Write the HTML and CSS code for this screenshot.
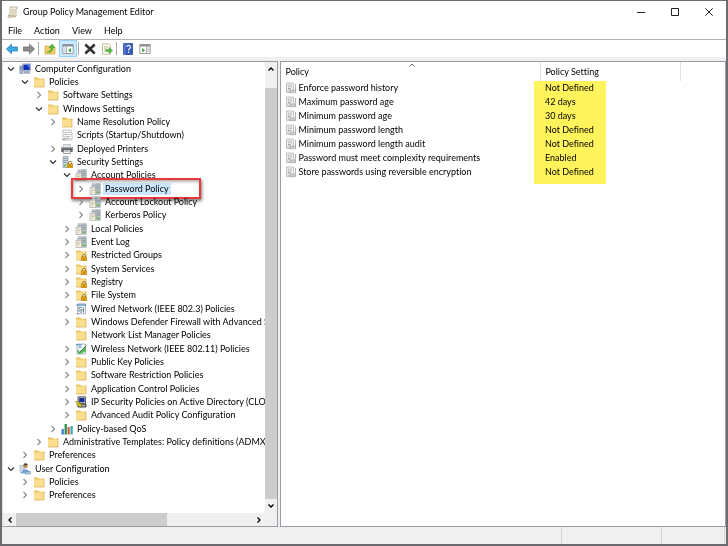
FILE: index.html
```
<!DOCTYPE html>
<html lang="en">
<head>
    <meta charset="UTF-8">
    <meta name="viewport" content="width=device-width, initial-scale=1.0">
    <title>Group Policy Management Editor</title>
    <link rel="stylesheet" href="styles.css">
</head>
<body>
    <!-- Icon set -->
    <svg class="sprite" aria-hidden="true">
        <symbol id="folder" viewBox="0 0 12 12">
            <path d="M1 1.500h4l1 1h5v8.500H1z" fill="#e9c465"/>
            <path d="M1 3.500h10v7.500H1z" fill="#fbdf8f"/>
            <path d="M7 1.500h3v1.500h-3z" fill="#fff5d5"/>
            <path d="M1 11h10V2.500" fill="none" stroke="#d3a848" stroke-width=".7"/>
        </symbol>
        <symbol id="lock" viewBox="0 0 12 12">
            <path d="M7.500 8V6.800a1.500 1.500 0 0 1 3 0V8" fill="none" stroke="#8b7430" stroke-width=".9"/>
            <path d="M6.300 7.800h5.400V12H6.300z" fill="#e8a81c" stroke="#a36f08" stroke-width=".5"/>
            <path d="M9 9v1.800" stroke="#7c5300" stroke-width=".8"/>
        </symbol>
        <symbol id="folder-lock" viewBox="0 0 12 12">
            <use href="#folder"/>
            <use href="#lock"/>
        </symbol>
        <symbol id="server" viewBox="0 0 12 12">
            <path d="M3 .8h3.500v6H3z" fill="#dfe5e8" stroke="#8a979e" stroke-width=".6"/>
            <path d="M7.300.8h3.900v10.400H7.300z" fill="#c3ccd2" stroke="#78868f" stroke-width=".6"/>
            <path d="M3.500 2.500h2.500M8 2.800h2.500M8 4.500h2.500M8 6.200h2.500" stroke="#6f7f88" stroke-width=".7"/>
            <path d="M1 4.200h5.500v7.300H1z" fill="#faf6e0" stroke="#8e9699" stroke-width=".6"/>
            <path d="M2 6h3.500M2 7.600h3.500M2 9.200h2.500" stroke="#a9a68c" stroke-width=".6"/>
            <path d="M8.300 8.300h2v1.800h-2z" fill="#4fb535"/>
        </symbol>
        <symbol id="security" viewBox="0 0 12 12">
            <path d="M2 .5h5v11H2z" fill="#c8d6e0" stroke="#788b99" stroke-width=".6"/>
            <path d="M2.500 2.500h4M2.500 4.500h4M2.500 6.500h3" stroke="#6f8797" stroke-width=".7"/>
            <path d="M3 8.500h2v2H3z" fill="#6bbf4b"/>
            <use href="#lock"/>
        </symbol>
        <symbol id="computer" viewBox="0 0 12 12">
            <path d="M3.500.8h8v7.500h-8z" fill="#dbe3ee" stroke="#8a97aa" stroke-width=".6"/>
            <path d="M4.300 1.600h6.400v5.600H4.300z" fill="#1430b4"/>
            <path d="M7 1.600h3.700v3.700z" fill="#4c79f0"/>
            <path d="M5 8.300h5l1.500 2.400H4z" fill="#9fa9b8"/>
            <path d="M.8 3h2.700v7.500H.8z" fill="#aebbd0" stroke="#67789a" stroke-width=".5"/>
            <path d="M1.300 4.500h1.700M1.300 6h1.700" stroke="#4d608c" stroke-width=".6"/>
        </symbol>
        <symbol id="user" viewBox="0 0 12 12">
            <path d="M1 2.500h4v7H1z" fill="#d5dde7" stroke="#8496ac" stroke-width=".5"/>
            <circle cx="6.500" cy="3" r="2.200" fill="#b98658"/>
            <path d="M4.500 2.500a2.100 2.100 0 0 1 4.200-.2l-2-.4z" fill="#553a28"/>
            <path d="M2.500 10.500c0-5 7-6 8.500 0z" fill="#6f9fce"/>
            <path d="M6.500 8.500h5v2.500h-5z" fill="#a9c6e2" stroke="#5f84aa" stroke-width=".5"/>
        </symbol>
        <symbol id="script" viewBox="0 0 12 12">
            <path d="M2 1h8v2l1 1v7H2z" fill="#fafafa" stroke="#a4a4a4" stroke-width=".7"/>
            <path d="M3.500 3.500h2M6.500 3.500h2M3.500 5.500h3M7.500 5.500h2M3.500 7.500h1M5.500 7.500h3M3 9.300h6" stroke="#999" stroke-width=".8"/>
            <path d="M1 10.500h3" stroke="#999" stroke-width=".8"/>
        </symbol>
        <symbol id="printer" viewBox="0 0 12 12">
            <path d="M2.500 1.500h7V5h-7z" fill="#e4e7ea" stroke="#8a8f94" stroke-width=".5"/>
            <path d="M.3 4h11.400v5H.3z" fill="#5c6268"/>
            <path d="M.3 4h11.400v1.300H.3z" fill="#a4aab0"/>
            <path d="M2.500 7h7v3.500h-7z" fill="#f3f4f5" stroke="#62676c" stroke-width=".6"/>
            <path d="M3.500 8.500h5" stroke="#9097a0" stroke-width=".6"/>
        </symbol>
        <symbol id="wired" viewBox="0 0 12 12">
            <path d="M2.500.8h8v10h-8z" fill="#eef5fb" stroke="#88a" stroke-width=".6"/>
            <path d="M1.500 2h9.500" stroke="#4585b8" stroke-width="1.200"/>
            <path d="M4 4v5M4 4.500h3M6 6v4M8.500 4.500v5M6 7h2.500" fill="none" stroke="#57707f" stroke-width=".8"/>
            <path d="M1.500 10.800h2" stroke="#777" stroke-width=".9"/>
        </symbol>
        <symbol id="wireless" viewBox="0 0 12 12">
            <path d="M2 1h8.500v10H2z" fill="#eef4f6" stroke="#8a949c" stroke-width=".6"/>
            <path d="M1 1.800h5.500M3.500 4h3" stroke="#467fae" stroke-width="1"/>
            <path d="M2.500 7.500l2 2.500L11 3.500V8L6 11H3z" fill="#5ab85c"/>
            <path d="M2.500 7l2 2.500L11 3" fill="none" stroke="#247b38" stroke-width="1"/>
        </symbol>
        <symbol id="ipsec" viewBox="0 0 12 12">
            <path d="M3 .8h7.500v6.500H3z" fill="#c9c9c9" stroke="#222" stroke-width=".7"/>
            <path d="M4.200 2h5.200v4H4.200z" fill="#152a9b"/>
            <path d="M3 8h8v3H3z" fill="#a8a8a8" stroke="#222" stroke-width=".8"/>
            <path d="M.5 5.500l4 .5-1 1.500 3 .5-1 3.500-1.500-2-2.500-.5 1-1z" fill="#f4e618" stroke="#5d5606" stroke-width=".5"/>
        </symbol>
        <symbol id="qos" viewBox="0 0 12 12">
            <path d="M.5 6h2.300v5.500H.5z" fill="#2874cf"/>
            <path d="M3.500 1h2.300v10.500H3.500z" fill="#188844"/>
            <path d="M6.500 4h2.200v7.500H6.500z" fill="#d04d29"/>
            <path d="M9.500 3h2.200v8.500H9.500z" fill="#20a5b3"/>
            <path d="M.8 6v5M3.800 1v10M6.800 4v7M9.800 3v8" stroke="#fff" stroke-opacity=".5" stroke-width=".5"/>
        </symbol>
        <symbol id="policy" viewBox="0 0 12 12">
            <path d="M1.500 1h7v9.500h-7z" fill="#f3f3f3" stroke="#aaa" stroke-width=".7"/>
            <path d="M2.800 3h1.700M5.200 3h1.800M2.800 4.800h1.700M5.200 4.800h1.800M3 6.500h3" stroke="#999" stroke-width=".8"/>
            <path d="M10.500 2v8.500" stroke="#b4b4b4" stroke-width="1"/>
            <circle cx="4" cy="8.500" r="1.300" fill="none" stroke="#aaa" stroke-width=".7"/>
            <path d="M5.500 8h5v2.800h-5z" fill="#cfcfcf" stroke="#a2a2a2" stroke-width=".6"/>
        </symbol>
        <symbol id="scroll" viewBox="0 0 12 12">
            <path d="M3 1h7.500v1.500L9 3v7.500H1.500V9H3z" fill="#f6efdc" stroke="#a99f85" stroke-width=".7"/>
            <path d="M4.500 3.500h3M4.500 5h3M4.500 6.500h3M4.500 8h3" stroke="#b3a98d" stroke-width=".6"/>
            <path d="M1 9.500h6.500v1.800H1z" fill="#d9cba2" stroke="#a99f85" stroke-width=".5"/>
        </symbol>
        <symbol id="arrow-left" viewBox="0 0 12 12">
            <path d="M.4 6L5.500 1.200V4h6.100v4H5.500v2.800z" fill="#3eaae6" stroke="#1d76b4" stroke-width=".7"/>
        </symbol>
        <symbol id="arrow-right" viewBox="0 0 12 12">
            <path d="M11.600 6L6.500 1.200V4H.4v4h6.100v2.800z" fill="#8e8e8e" stroke="#666" stroke-width=".7"/>
        </symbol>
        <symbol id="folder-up" viewBox="0 0 12 12">
            <path d="M1 3h4l1 1.500h5V11H1z" fill="#f4cf69" stroke="#c79a35" stroke-width=".6"/>
            <path d="M3 9c3 0 4-2 4-4.500H5L8 1l3 3.500H9C9 8 7 10 3 9z" fill="#55bb3a" stroke="#2e8a1c" stroke-width=".4"/>
        </symbol>
        <symbol id="pane" viewBox="0 0 12 12">
            <path d="M.8 1.500h10.400v9H.8z" fill="#fff" stroke="#7d8994" stroke-width=".8"/>
            <path d="M.8 1.500h10.400v2H.8z" fill="#8492a0"/>
            <path d="M4.500 3.500v7" stroke="#7d8994" stroke-width=".7"/>
            <path d="M2 5h1.500M2 6.800h1.500M2 8.500h1.500" stroke="#8fa9c2" stroke-width=".8"/>
            <path d="M9 5v4.400L6.200 7.200z" fill="#35a735"/>
        </symbol>
        <symbol id="pane-right" viewBox="0 0 12 12">
            <path d="M.8 1.500h10.400v9H.8z" fill="#fff" stroke="#858585" stroke-width=".8"/>
            <path d="M.8 1.500h10.400v2H.8z" fill="#8a8f94"/>
            <path d="M7.500 3.500v7" stroke="#858585" stroke-width=".7"/>
            <path d="M8.500 5h1.800M8.500 6.800h1.800M8.500 8.500h1.800" stroke="#99a" stroke-width=".8"/>
            <path d="M3.200 5v4.400L6 7.200z" fill="#35a735"/>
        </symbol>
        <symbol id="delete" viewBox="0 0 12 12">
            <path d="M1.300 1.500l9.400 9M10.700 1.500l-9.400 9" stroke="#333" stroke-width="2.600"/>
        </symbol>
        <symbol id="export" viewBox="0 0 12 12">
            <path d="M1.500.8h6l2 2v8.400h-8z" fill="#fffdf0" stroke="#a99d72" stroke-width=".7"/>
            <path d="M3 4h4.500M3 6h3M3 8h3" stroke="#9a947c" stroke-width=".7"/>
            <path d="M5 6.500h3v-2l3.700 3L8 10.500v-2H5z" fill="#54bd42" stroke="#2e8a1c" stroke-width=".4"/>
        </symbol>
        <symbol id="help" viewBox="0 0 12 12">
            <path d="M1.500.5h9v11h-9z" fill="#3358bf" stroke="#233f8f" stroke-width=".7"/>
            <path d="M2.800.5v11" stroke="#8ba5e8" stroke-width=".7"/>
            <path d="M4.800 4a1.800 1.800 0 1 1 2.600 1.700Q6.600 6.200 6.600 7.500" fill="none" stroke="#fff" stroke-width="1.200"/>
            <circle cx="6.600" cy="9.300" r=".8" fill="#fff"/>
        </symbol>
        <symbol id="up" viewBox="0 0 8 8"><path d="M1.500 5.500L4 3l2.500 2.500" fill="none" stroke="currentColor" stroke-width="1.300"/></symbol>
        <symbol id="down" viewBox="0 0 8 8"><path d="M1.500 2.500L4 5l2.500-2.500" fill="none" stroke="currentColor" stroke-width="1.300"/></symbol>
        <symbol id="left" viewBox="0 0 8 8"><path d="M5.500 1.500L3 4l2.500 2.500" fill="none" stroke="currentColor" stroke-width="1.300"/></symbol>
        <symbol id="right" viewBox="0 0 8 8"><path d="M2.500 1.500L5 4 2.500 6.500" fill="none" stroke="currentColor" stroke-width="1.300"/></symbol>
        <symbol id="closed" viewBox="0 0 8 8"><path d="M2.500 1L5.500 4l-3 3" fill="none" stroke="#888" stroke-width="1.100"/></symbol>
        <symbol id="open" viewBox="0 0 8 8"><path d="M1 2.500l3 3 3-3" fill="none" stroke="#333" stroke-width="1.200"/></symbol>
    </svg>

    <div class="window">
        <header class="titlebar">
            <svg class="icon"><use href="#scroll"/></svg>
            <h1>Group Policy Management Editor</h1>
            <div class="controls">
                <button aria-label="Minimize"><svg viewBox="0 0 8 8"><path d="M0 4.500h8" stroke="#222"/></svg></button>
                <button aria-label="Maximize"><svg viewBox="0 0 8 8"><path d="M.5.500h7v7h-7z" fill="none" stroke="#222"/></svg></button>
                <button aria-label="Close"><svg viewBox="0 0 8 8"><path d="M.3.300l7.400 7.400M7.700.300L.3 7.700" stroke="#222"/></svg></button>
            </div>
        </header>

        <nav class="menu">
            <button>File</button>
            <button>Action</button>
            <button>View</button>
            <button>Help</button>
        </nav>

        <div class="toolbar">
            <button aria-label="Back"><svg class="icon"><use href="#arrow-left"/></svg></button>
            <button aria-label="Forward"><svg class="icon"><use href="#arrow-right"/></svg></button>
            <span class="sep"></span>
            <button aria-label="Up one level"><svg class="icon"><use href="#folder-up"/></svg></button>
            <button class="active" aria-label="Show console tree"><svg class="icon"><use href="#pane"/></svg></button>
            <span class="sep"></span>
            <button aria-label="Delete"><svg class="icon"><use href="#delete"/></svg></button>
            <button aria-label="Export list"><svg class="icon"><use href="#export"/></svg></button>
            <span class="sep"></span>
            <button aria-label="Help"><svg class="icon"><use href="#help"/></svg></button>
            <button aria-label="Show action pane"><svg class="icon"><use href="#pane-right"/></svg></button>
        </div>

        <main class="panes">
            <section class="pane tree-pane">
                <ul class="tree">
                    <li class="l0"><button aria-label="Collapse"><svg><use href="#open"/></svg></button><svg class="icon"><use href="#computer"/></svg><a href="#">Computer Configuration</a></li>
                    <li class="l1"><button aria-label="Collapse"><svg><use href="#open"/></svg></button><svg class="icon"><use href="#folder"/></svg><a href="#">Policies</a></li>
                    <li class="l2"><button aria-label="Expand"><svg><use href="#closed"/></svg></button><svg class="icon"><use href="#folder"/></svg><a href="#">Software Settings</a></li>
                    <li class="l2"><button aria-label="Collapse"><svg><use href="#open"/></svg></button><svg class="icon"><use href="#folder"/></svg><a href="#">Windows Settings</a></li>
                    <li class="l3"><button aria-label="Expand"><svg><use href="#closed"/></svg></button><svg class="icon"><use href="#folder"/></svg><a href="#">Name Resolution Policy</a></li>
                    <li class="l3 leaf"><svg class="icon"><use href="#script"/></svg><a href="#">Scripts (Startup/Shutdown)</a></li>
                    <li class="l3"><button aria-label="Expand"><svg><use href="#closed"/></svg></button><svg class="icon"><use href="#printer"/></svg><a href="#">Deployed Printers</a></li>
                    <li class="l3"><button aria-label="Collapse"><svg><use href="#open"/></svg></button><svg class="icon"><use href="#security"/></svg><a href="#">Security Settings</a></li>
                    <li class="l4"><button aria-label="Collapse"><svg><use href="#open"/></svg></button><svg class="icon"><use href="#server"/></svg><a href="#">Account Policies</a></li>
                    <li class="l5 marked"><button aria-label="Expand"><svg><use href="#closed"/></svg></button><svg class="icon"><use href="#server"/></svg><a href="#" class="selected">Password Policy</a></li>
                    <li class="l5"><button aria-label="Expand"><svg><use href="#closed"/></svg></button><svg class="icon"><use href="#server"/></svg><a href="#">Account Lockout Policy</a></li>
                    <li class="l5"><button aria-label="Expand"><svg><use href="#closed"/></svg></button><svg class="icon"><use href="#server"/></svg><a href="#">Kerberos Policy</a></li>
                    <li class="l4"><button aria-label="Expand"><svg><use href="#closed"/></svg></button><svg class="icon"><use href="#server"/></svg><a href="#">Local Policies</a></li>
                    <li class="l4"><button aria-label="Expand"><svg><use href="#closed"/></svg></button><svg class="icon"><use href="#server"/></svg><a href="#">Event Log</a></li>
                    <li class="l4"><button aria-label="Expand"><svg><use href="#closed"/></svg></button><svg class="icon"><use href="#folder-lock"/></svg><a href="#">Restricted Groups</a></li>
                    <li class="l4"><button aria-label="Expand"><svg><use href="#closed"/></svg></button><svg class="icon"><use href="#folder-lock"/></svg><a href="#">System Services</a></li>
                    <li class="l4"><button aria-label="Expand"><svg><use href="#closed"/></svg></button><svg class="icon"><use href="#folder-lock"/></svg><a href="#">Registry</a></li>
                    <li class="l4"><button aria-label="Expand"><svg><use href="#closed"/></svg></button><svg class="icon"><use href="#folder-lock"/></svg><a href="#">File System</a></li>
                    <li class="l4"><button aria-label="Expand"><svg><use href="#closed"/></svg></button><svg class="icon"><use href="#wired"/></svg><a href="#">Wired Network (IEEE 802.3) Policies</a></li>
                    <li class="l4"><button aria-label="Expand"><svg><use href="#closed"/></svg></button><svg class="icon"><use href="#folder"/></svg><a href="#">Windows Defender Firewall with Advanced S</a></li>
                    <li class="l4 leaf"><svg class="icon"><use href="#folder"/></svg><a href="#">Network List Manager Policies</a></li>
                    <li class="l4"><button aria-label="Expand"><svg><use href="#closed"/></svg></button><svg class="icon"><use href="#wireless"/></svg><a href="#">Wireless Network (IEEE 802.11) Policies</a></li>
                    <li class="l4"><button aria-label="Expand"><svg><use href="#closed"/></svg></button><svg class="icon"><use href="#folder"/></svg><a href="#">Public Key Policies</a></li>
                    <li class="l4"><button aria-label="Expand"><svg><use href="#closed"/></svg></button><svg class="icon"><use href="#folder"/></svg><a href="#">Software Restriction Policies</a></li>
                    <li class="l4"><button aria-label="Expand"><svg><use href="#closed"/></svg></button><svg class="icon"><use href="#folder"/></svg><a href="#">Application Control Policies</a></li>
                    <li class="l4"><button aria-label="Expand"><svg><use href="#closed"/></svg></button><svg class="icon"><use href="#ipsec"/></svg><a href="#">IP Security Policies on Active Directory (CLOU</a></li>
                    <li class="l4"><button aria-label="Expand"><svg><use href="#closed"/></svg></button><svg class="icon"><use href="#folder"/></svg><a href="#">Advanced Audit Policy Configuration</a></li>
                    <li class="l3"><button aria-label="Expand"><svg><use href="#closed"/></svg></button><svg class="icon"><use href="#qos"/></svg><a href="#">Policy-based QoS</a></li>
                    <li class="l2"><button aria-label="Expand"><svg><use href="#closed"/></svg></button><svg class="icon"><use href="#folder"/></svg><a href="#">Administrative Templates: Policy definitions (ADMX</a></li>
                    <li class="l1"><button aria-label="Expand"><svg><use href="#closed"/></svg></button><svg class="icon"><use href="#folder"/></svg><a href="#">Preferences</a></li>
                    <li class="l0"><button aria-label="Collapse"><svg><use href="#open"/></svg></button><svg class="icon"><use href="#user"/></svg><a href="#">User Configuration</a></li>
                    <li class="l1"><button aria-label="Expand"><svg><use href="#closed"/></svg></button><svg class="icon"><use href="#folder"/></svg><a href="#">Policies</a></li>
                    <li class="l1"><button aria-label="Expand"><svg><use href="#closed"/></svg></button><svg class="icon"><use href="#folder"/></svg><a href="#">Preferences</a></li>
                </ul>
                <div class="vscroll">
                    <button aria-label="Scroll up"><svg><use href="#up"/></svg></button>
                    <div class="thumb"></div>
                    <button aria-label="Scroll down"><svg><use href="#down"/></svg></button>
                </div>
                <div class="hscroll">
                    <button aria-label="Scroll left"><svg><use href="#left"/></svg></button>
                    <div class="track"><div class="thumb"></div></div>
                    <button aria-label="Scroll right"><svg><use href="#right"/></svg></button>
                </div>
            </section>

            <section class="pane list-pane">
                <table>
                    <thead>
                        <tr>
                            <th class="name">Policy<svg class="sort" viewBox="0 0 8 8"><path d="M1.500 5.500L4 3l2.500 2.500" fill="none" stroke="#666"/></svg></th>
                            <th class="setting">Policy Setting</th>
                            <th></th>
                        </tr>
                    </thead>
                    <tbody>
                        <tr><td><svg class="icon"><use href="#policy"/></svg>Enforce password history</td><td class="value">Not Defined</td><td></td></tr>
                        <tr><td><svg class="icon"><use href="#policy"/></svg>Maximum password age</td><td class="value">42 days</td><td></td></tr>
                        <tr><td><svg class="icon"><use href="#policy"/></svg>Minimum password age</td><td class="value">30 days</td><td></td></tr>
                        <tr><td><svg class="icon"><use href="#policy"/></svg>Minimum password length</td><td class="value">Not Defined</td><td></td></tr>
                        <tr><td><svg class="icon"><use href="#policy"/></svg>Minimum password length audit</td><td class="value">Not Defined</td><td></td></tr>
                        <tr><td><svg class="icon"><use href="#policy"/></svg>Password must meet complexity requirements</td><td class="value">Enabled</td><td></td></tr>
                        <tr><td><svg class="icon"><use href="#policy"/></svg>Store passwords using reversible encryption</td><td class="value">Not Defined</td><td></td></tr>
                    </tbody>
                </table>
            </section>
        </main>

        <footer class="status">
            <span class="message"></span>
            <span class="progress"></span>
            <span class="info"></span>
        </footer>
    </div>
</body>
</html>
```
FILE: styles.css
```
* {
    box-sizing: border-box;
}
body {
    margin: 0;
    font-family: Lato, "Open Sans", sans-serif;
    font-size: 9px;
    font-variant-ligatures: none;
    line-height: 12px;
    color: #000;
}
button {
    display: flex;
    align-items: center;
    justify-content: center;
    padding: 0;
    border: 0;
    background: none;
    font: inherit;
    color: inherit;
}
a {
    color: inherit;
    text-decoration: none;
}
svg {
    display: block;
    width: 8px;
    height: 8px;
}
.icon {
    flex: none;
    width: 12px;
    height: 12px;
}
.sprite {
    position: absolute;
    width: 0;
    height: 0;
}
.window {
    display: flex;
    flex-direction: column;
    min-height: 100vh;
    border: 2px solid #6c6c6e;
    border-top-width: 1px;
    background: #fff;
}

/* Title, menu, toolbar */
.titlebar {
    display: flex;
    align-items: center;
    height: 22px;
    padding-left: 5px;
}
h1 {
    flex: 1;
    margin: 0 0 0 4px;
    font-size: 9px;
    font-weight: normal;
}
.controls {
    display: flex;
}
.controls button {
    width: 34px;
    height: 22px;
}
.menu {
    display: flex;
    gap: 12px;
    height: 16px;
    padding-left: 6px;
}
.toolbar {
    display: flex;
    align-items: center;
    height: 18px;
    padding-left: 1px;
    border-top: 1px solid #b4b4b6;
}
.toolbar button {
    width: 17px;
    height: 17px;
}
.toolbar .active {
    width: 18px;
    margin-left: 1px;
    border: 1px solid #99d1ff;
    background: #cce8ff;
}
.sep {
    width: 1px;
    height: 13px;
    margin: 0 2px 0 1px;
    background: #aaa;
}

/* Two panes */
.panes {
    flex: 1;
    display: flex;
    gap: 2px;
    padding-top: 4px;
    background: #f0f0f0;
}
.pane {
    min-width: 0;
    border: 1px solid #9a9ba6;
    background: #fff;
}
.tree-pane {
    flex: 276 1 0;
    display: grid;
    grid-template: 1fr 13px / 1fr 12px;
    border-left-color: #ddd;
}
.tree {
    display: grid;
    grid-auto-rows: 1fr;
    min-width: 0;
    margin: 0;
    padding: 0 0 11px;
    list-style: none;
}
.tree li {
    position: relative;
    display: flex;
    align-items: center;
    min-width: 0;
    white-space: nowrap;
}
.tree li button {
    flex: none;
    width: 12px;
    height: 12px;
    margin-right: 2px;
}
.tree .icon {
    margin-right: 2px;
}
.tree a {
    padding-left: 2px;
}
.tree .selected {
    padding-right: 2px;
    background: #cce8ff;
}
.l0 { padding-left: 2px; }
.l1 { padding-left: 16px; }
.l2 { padding-left: 30px; }
.l3 { padding-left: 44px; }
.l4 { padding-left: 58px; }
.l5 { padding-left: 72px; }
.leaf.l3 { padding-left: 58px; }
.leaf.l4 { padding-left: 72px; }

/* Red frame round the row */
.marked::after {
    content: "";
    position: absolute;
    top: -4px;
    bottom: -4px;
    left: 68px;
    width: 126px;
    border: 2px solid #e8383b;
    box-shadow: 1px 2px 3px rgba(0, 0, 0, 0.5), inset 1px 2px 3px rgba(0, 0, 0, 0.3);
}

/* Scrollbars */
.vscroll {
    position: relative;
    display: flex;
    flex-direction: column;
    background: #f0f0f0;
}
.vscroll button {
    height: 14px;
}
.vscroll .thumb {
    flex: 1;
    margin-top: 12px;
}
.hscroll {
    grid-column: 1 / -1;
    display: flex;
    padding-right: 12px;
    background: #f0f0f0;
}
.hscroll button {
    width: 13px;
}
.track {
    flex: 1;
    display: flex;
}
.thumb {
    background: #cdcdcd;
}
.track .thumb {
    width: 64%;
}

/* Policy list */
.list-pane {
    flex: 446 1 0;
}
table {
    width: 100%;
    table-layout: fixed;
    border-collapse: collapse;
}
th, td {
    position: relative;
    height: 14px;
    padding: 0 4px;
    text-align: left;
    font-weight: normal;
    white-space: nowrap;
}
th {
    height: 19px;
    border-right: 1px solid #e2e2e2;
}
th:last-child {
    border-right: 0;
}
.name {
    width: 58.5%;
}
.setting {
    width: 31.5%;
}
.sort {
    position: absolute;
    top: -1px;
    left: 49%;
}
td .icon {
    display: inline-block;
    margin-right: 1px;
    vertical-align: top;
}
/* Yellow marker over the values */
.value::after {
    content: "";
    position: absolute;
    top: 0;
    bottom: 0;
    left: -7px;
    width: 72px;
    background: #fff45c;
    mix-blend-mode: multiply;
}
tr:last-child .value::after {
    bottom: -5px;
}

/* Status bar */
.status {
    display: flex;
    height: 17px;
    background: #f0f0f0;
}
.status span {
    border-right: 1px solid #d4d4d4;
}
.message {
    flex: 561;
}
.progress {
    flex: 99;
}
.info {
    flex: 62;
    margin-right: 1px;
}
```
